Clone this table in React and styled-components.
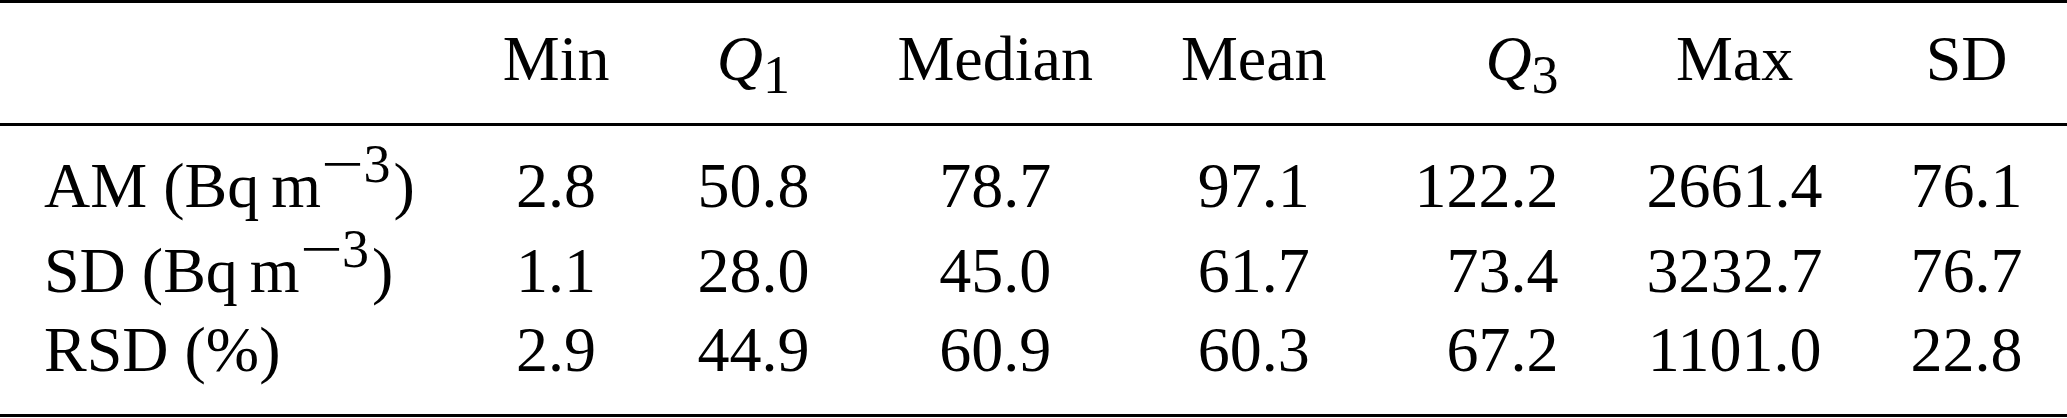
import React from 'react';
import styled, { createGlobalStyle } from 'styled-components';

const GlobalStyle = createGlobalStyle`
  html, body {
    margin: 0;
    padding: 0;
    background: #ffffff;
  }
  body {
    font-family: "Liberation Serif", "Times New Roman", serif;
    color: #000000;
  }
`;

const Table = styled.table`
  border-collapse: separate;
  border-spacing: 0;
  font-size: 64px;
  border-top: 3px solid #000;
  border-bottom: 3px solid #000;
`;

const HeadCell = styled.th`
  font-weight: normal;
  padding: 16px 44px 25px;
  line-height: 79px;
  white-space: nowrap;
  vertical-align: baseline;
  text-align: ${(p) => p.$align};
  border-bottom: 3px solid #000;
`;

const Cell = styled.td`
  padding: ${(p) => p.$padTop}px 44px ${(p) => p.$padBottom}px;
  line-height: 79px;
  white-space: nowrap;
  vertical-align: baseline;
  text-align: ${(p) => p.$align};
`;

const Var = styled.span`
  font-style: italic;
`;

const Sub = styled.span`
  font-size: 54px;
  line-height: 0;
  vertical-align: -13px;
`;

const Sup = styled.span`
  font-size: 54px;
  line-height: 0;
  vertical-align: 25px;
  padding-right: 3px;
`;

const Minus = styled.span`
  display: inline-block;
  margin: 0 6px;
  transform: scaleX(1.4);
`;

const Thin = styled.span`
  display: inline-block;
  width: 12px;
`;

const columns = [
  { key: 'min', label: 'Min', align: 'center' },
  { key: 'q1', label: <><Var>Q</Var><Sub>1</Sub></>, align: 'center' },
  { key: 'median', label: 'Median', align: 'center' },
  { key: 'mean', label: 'Mean', align: 'center' },
  { key: 'q3', label: <><Var>Q</Var><Sub>3</Sub></>, align: 'right' },
  { key: 'max', label: 'Max', align: 'center' },
  { key: 'sd', label: 'SD', align: 'center' },
];

const Unit = () => (
  <>
    Bq<Thin />m<Sup><Minus>−</Minus>3</Sup>
  </>
);

const rows = [
  { name: 'AM', unit: <Unit />, values: ['2.8', '50.8', '78.7', '97.1', '122.2', '2661.4', '76.1'], padTop: 20, padBottom: 0 },
  { name: 'SD', unit: <Unit />, values: ['1.1', '28.0', '45.0', '61.7', '73.4', '3232.7', '76.7'], padTop: 6, padBottom: 0 },
  { name: 'RSD', unit: '%', values: ['2.9', '44.9', '60.9', '60.3', '67.2', '1101.0', '22.8'], padTop: 0, padBottom: 25 },
];

export default function App() {
  return (
    <>
      <GlobalStyle />
      <Table>
        <thead>
          <tr>
            <HeadCell $align="left" />
            {columns.map((c) => (
              <HeadCell key={c.key} $align={c.align}>
                {c.label}
              </HeadCell>
            ))}
          </tr>
        </thead>
        <tbody>
          {rows.map((r) => (
            <tr key={r.name}>
              <Cell $align="left" $padTop={r.padTop} $padBottom={r.padBottom}>
                {r.name} ({r.unit})
              </Cell>
              {r.values.map((v, i) => (
                <Cell
                  key={columns[i].key}
                  $align={columns[i].align}
                  $padTop={r.padTop}
                  $padBottom={r.padBottom}
                >
                  {v}
                </Cell>
              ))}
            </tr>
          ))}
        </tbody>
      </Table>
    </>
  );
}
